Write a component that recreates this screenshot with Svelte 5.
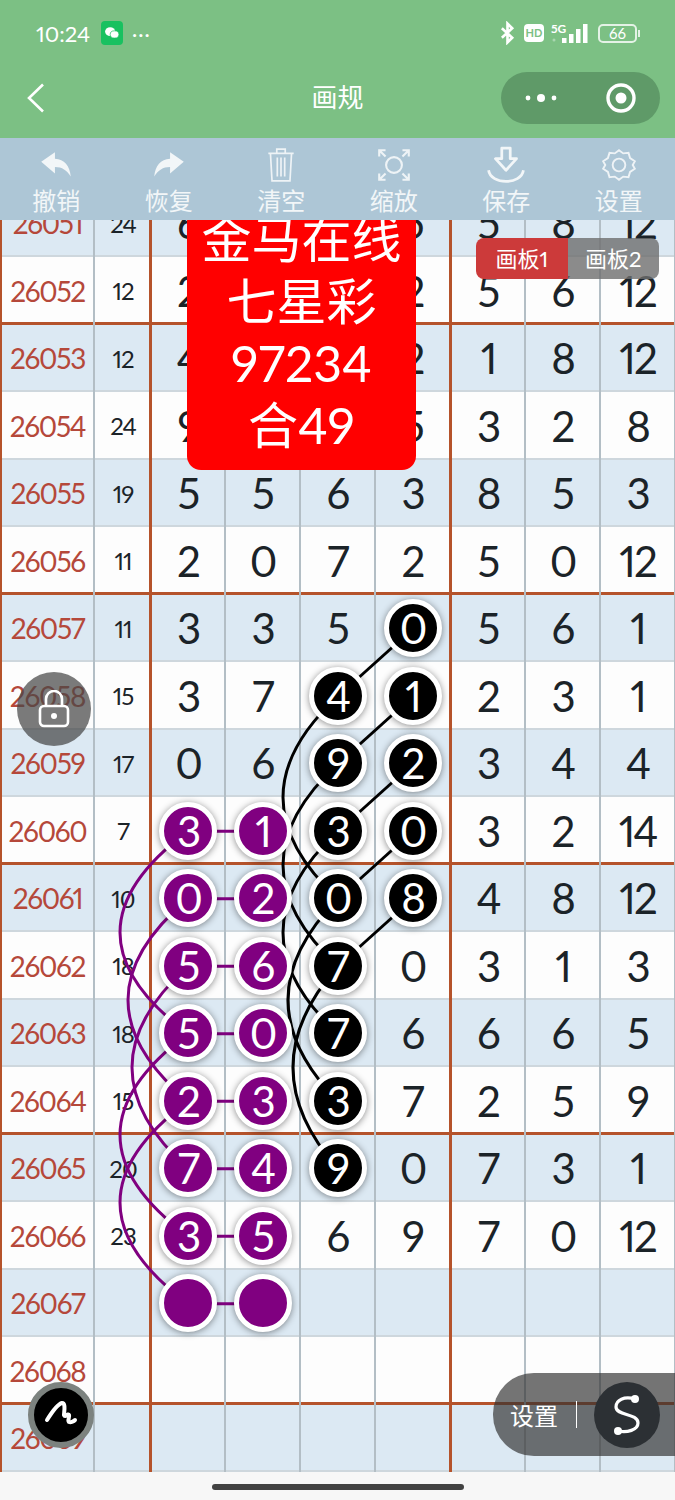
<script>
  const ROW_H = 67.5;
  const FIRST = 26051;
  const COL_X = [188, 263, 338, 413];

  // b = black ball, p = purple ball, anything else is a plain digit
  const rows = [
    { sum: 24, cells: ['6', '', '', '5'], tail: [5, 8, 12] },
    { sum: 12, cells: ['2', '', '', '2'], tail: [5, 6, 12] },
    { sum: 12, cells: ['4', '', '', '2'], tail: [1, 8, 12] },
    { sum: 24, cells: ['9', '', '', '5'], tail: [3, 2, 8] },
    { sum: 19, cells: ['5', '5', '6', '3'], tail: [8, 5, 3] },
    { sum: 11, cells: ['2', '0', '7', '2'], tail: [5, 0, 12] },
    { sum: 11, cells: ['3', '3', '5', 'b0'], tail: [5, 6, 1] },
    { sum: 15, cells: ['3', '7', 'b4', 'b1'], tail: [2, 3, 1] },
    { sum: 17, cells: ['0', '6', 'b9', 'b2'], tail: [3, 4, 4] },
    { sum: 7, cells: ['p3', 'p1', 'b3', 'b0'], tail: [3, 2, 14] },
    { sum: 10, cells: ['p0', 'p2', 'b0', 'b8'], tail: [4, 8, 12] },
    { sum: 18, cells: ['p5', 'p6', 'b7', '0'], tail: [3, 1, 3] },
    { sum: 18, cells: ['p5', 'p0', 'b7', '6'], tail: [6, 6, 5] },
    { sum: 15, cells: ['p2', 'p3', 'b3', '7'], tail: [2, 5, 9] },
    { sum: 20, cells: ['p7', 'p4', 'b9', '0'], tail: [7, 3, 1] },
    { sum: 23, cells: ['p3', 'p5', '6', '9'], tail: [7, 0, 12] },
    { sum: '', cells: ['p', 'p', '', ''], tail: ['', '', ''] },
    { sum: '', cells: ['', '', '', ''], tail: ['', '', ''] },
    { sum: '', cells: ['', '', '', ''], tail: ['', '', ''] }
  ];

  const cy = (r) => ROW_H * r + ROW_H / 2;

  const straight = [
    [3, 6, 2, 7], [3, 7, 2, 8], [3, 8, 2, 9], [3, 9, 2, 10], [3, 10, 2, 11]
  ].map(([c1, r1, c2, r2]) => ({ x1: COL_X[c1], y1: cy(r1), x2: COL_X[c2], y2: cy(r2) }));

  const links = [9, 10, 11, 12, 13, 14, 15, 16];

  const arc = (col, r, bulgeX) => {
    const x = COL_X[col];
    const ctrl = x - 2 * (x - bulgeX);
    const y1 = cy(r);
    const y2 = cy(r + 3);
    return `M${x} ${y1}Q${ctrl} ${(y1 + y2) / 2} ${x} ${y2}`;
  };

  const blackArcs = [[7, 283], [8, 283], [9, 283], [10, 288], [11, 293]].map(([r, b]) => arc(2, r, b));
  const purpleArcs = [[9, 120], [10, 128], [11, 132], [12, 120], [13, 120]].map(([r, b]) => arc(0, r, b));

  const tools = ['撤销', '恢复', '清空', '缩放', '保存', '设置'];
</script>

<div class="page">
  <header class="appbar">
    <div class="status">
      <span class="time">10:24</span>
      <span class="wechat">
        <svg viewBox="0 0 22 22" width="16" height="16">
          <ellipse cx="8.5" cy="9" rx="7" ry="6" fill="#fff" />
          <ellipse cx="14.5" cy="13" rx="6" ry="5" fill="#fff" stroke="#19c160" stroke-width="1" />
        </svg>
      </span>
      <span class="more">···</span>
      <span class="spacer"></span>
      <svg class="bt" viewBox="0 0 16 24" width="15" height="24">
        <path d="M2 7l11 10-5 5V2l5 5L2 17" fill="none" stroke="#fff" stroke-width="2.8" />
      </svg>
      <span class="hd">HD</span>
      <svg class="signal" viewBox="0 0 40 26" width="40" height="26">
        <text x="0" y="13" class="five-g">5G</text>
        <circle cx="3" cy="20" r="1.5" fill="#a9d6b0" />
        <rect x="11" y="18" width="4.5" height="5" fill="#fff" />
        <rect x="18" y="14" width="4.5" height="9" fill="#fff" />
        <rect x="25" y="9" width="4.5" height="14" fill="#fff" />
        <rect x="32" y="4" width="4.5" height="19" fill="#fff" />
      </svg>
      <span class="battery"><span class="level">66</span></span>
      <span class="cap"></span>
    </div>
    <div class="navbar">
      <svg class="back" viewBox="0 0 20 30" width="20" height="30">
        <path d="M17 1.5L3 15l14 13.5" fill="none" stroke="#fff" stroke-width="2.6" />
      </svg>
      <h1>画规</h1>
      <div class="capsule">
        <svg viewBox="0 0 34 10" width="34" height="10">
          <circle cx="4" cy="5" r="2.4" fill="#fff" />
          <circle cx="17" cy="5" r="4" fill="#fff" />
          <circle cx="30" cy="5" r="2.4" fill="#fff" />
        </svg>
        <svg viewBox="0 0 32 32" width="32" height="32">
          <circle cx="16" cy="16" r="13" fill="none" stroke="#fff" stroke-width="3.4" />
          <circle cx="16" cy="16" r="5.5" fill="#fff" />
        </svg>
      </div>
    </div>
  </header>

  <nav class="toolbar">
    {#each tools as label, i}
      <div class="tool">
        <svg viewBox="0 0 36 36" width="38" height="38">
          {#if i === 0}
            <path d="M4 15L17 6v6c9 1 14 6 15 17-4-6-8-9-15-9v6z" fill="#f2f6f8" />
          {:else if i === 1}
            <path d="M32 15L19 6v6c-9 1-14 6-15 17 4-6 8-9 15-9v6z" fill="#f2f6f8" />
          {:else if i === 2}
            <g fill="none" stroke="#eef3f6" stroke-width="1.6">
              <path d="M6 7h24M14 7V3h8v4M8 7l1.5 26h17L28 7M14.5 11v18M18 11v18M21.5 11v18" />
            </g>
          {:else if i === 3}
            <g fill="none" stroke="#eef3f6" stroke-width="2">
              <circle cx="18" cy="18" r="7.5" />
              <path d="M4 10V4h6M26 4h6v6M4 26v6h6M32 26v6h-6M4 4l6 6M32 4l-6 6M4 32l6-6M32 32l-6-6" />
            </g>
          {:else if i === 4}
            <g fill="none" stroke="#f2f6f8" stroke-width="2.6" stroke-linejoin="round">
              <path d="M14 2h8v10h6L18 23 8 12h6zM1.5 23c2 14 31 14 33 0" />
            </g>
          {:else}
            <g fill="none" stroke="#eef3f6" stroke-width="1.8">
              <path d="M18 4l4 3 5-.5 1.5 5 4.5 3-2 3.500 2 3.500-4.500 3-1.500 5-5-.5-4 3-4-3-5 .5-1.500-5-4.500-3 2-3.500-2-3.500 4.500-3 1.500-5 5 .5z" />
              <circle cx="18" cy="18" r="6" />
            </g>
          {/if}
        </svg>
        <span>{label}</span>
      </div>
    {/each}
  </nav>

  <main class="viewport">
    <div class="sheet">
      {#each rows as row, r}
        <div class="row" class:alt={r % 2 === 0} class:thick={r % 4 === 1}>
          <div class="cell issue">{FIRST + r}</div>
          <div class="cell sum">{row.sum}</div>
          {#each row.cells as c, i}
            <div class="cell num" class:edge={i === 0}>
              {#if c[0] === 'b' || c[0] === 'p'}
                <span class="ball" class:purple={c[0] === 'p'}>{c.slice(1)}</span>
              {:else}
                {c}
              {/if}
            </div>
          {/each}
          {#each row.tail as t, i}
            <div class="cell num" class:edge={i === 0}>{t}</div>
          {/each}
        </div>
      {/each}

      <svg class="lines" width="675" height="1282.5" viewBox="0 0 675 1282.5">
        <g stroke="#000" stroke-width="3" fill="none">
          {#each straight as l}
            <line x1={l.x1} y1={l.y1} x2={l.x2} y2={l.y2} />
          {/each}
          {#each blackArcs as d}
            <path {d} />
          {/each}
        </g>
        <g stroke="#800080" stroke-width="3" fill="none">
          {#each links as r}
            <line x1={COL_X[0]} y1={cy(r)} x2={COL_X[1]} y2={cy(r)} />
          {/each}
          {#each purpleArcs as d}
            <path {d} />
          {/each}
        </g>
      </svg>
    </div>

    <div class="promo">
      <div>金马在线</div>
      <div>七星彩</div>
      <div>97234</div>
      <div>合49</div>
    </div>

    <div class="tabs">
      <span class="tab active">画板1</span>
      <span class="tab">画板2</span>
    </div>

    <button class="lock" aria-label="锁定">
      <svg viewBox="0 0 32 38" width="32" height="38">
        <path d="M8 16V9a8 8 0 0 1 16 0v7" fill="none" stroke="#fff" stroke-width="2.6" />
        <rect x="2" y="16" width="28" height="20" rx="4" fill="none" stroke="#fff" stroke-width="2.6" />
        <circle cx="16" cy="26" r="3" fill="#fff" />
      </svg>
    </button>

    <button class="brush" aria-label="画笔">
      <svg viewBox="0 0 40 40" width="40" height="40">
        <path d="M6 25C11 17 17 9 21 8c4 0 2 9 2 12 1 3 4-2 5 0 1 3-2 5 0 7 2 1 5-1 6-2" fill="none" stroke="#fff" stroke-width="4" stroke-linecap="round" stroke-linejoin="round" />
      </svg>
    </button>

    <div class="dock">
      <span class="dock-label">设置</span>
      <span class="divider"></span>
      <span class="dock-btn">
        <svg viewBox="0 0 36 50" width="36" height="50">
          <path d="M26 9C15 6 7 10 7 17c0 9 22 6 22 16 0 7-11 10-20 8" fill="none" stroke="#fff" stroke-width="3.2" />
          <circle cx="26" cy="9" r="4" fill="#fff" />
          <circle cx="9" cy="41" r="4" fill="#fff" />
        </svg>
      </span>
    </div>
  </main>

  <footer class="gesture"><span class="pill"></span></footer>
</div>

<style>
  :global(body) {
    margin: 0;
    background: #f7f7f7;
  }

  .page {
    width: 675px;
    height: 1500px;
    display: flex;
    flex-direction: column;
    overflow: hidden;
    font-family: Lato, "Noto Sans CJK SC", sans-serif;
    font-variant-numeric: proportional-nums;
  }

  .appbar {
    height: 138px;
    background: #7cc084;
    color: #fff;
    flex: none;
  }

  .status {
    height: 66px;
    display: flex;
    align-items: center;
    padding: 0 35px 0 36px;
    box-sizing: border-box;
  }

  .time {
    font-size: 22px;
  }

  .wechat {
    width: 22px;
    height: 24px;
    margin-left: 11px;
    border-radius: 4px;
    background: #19c160;
    display: flex;
    align-items: center;
    justify-content: center;
  }

  .more {
    margin-left: 9px;
    font-size: 20px;
    letter-spacing: 1px;
  }

  .spacer {
    flex: 1;
  }

  .hd {
    width: 20px;
    height: 18px;
    margin-left: 9px;
    border-radius: 4px;
    background: #fff;
    color: #7cc084;
    font-size: 11px;
    font-weight: 700;
    line-height: 18px;
    text-align: center;
  }

  .signal {
    margin-left: 7px;
  }

  .five-g {
    font-size: 12px;
    font-weight: 700;
    fill: #fff;
  }

  .battery {
    width: 39px;
    height: 19px;
    margin-left: 7px;
    border: 2px solid #e4f2e6;
    border-radius: 5px;
    box-sizing: border-box;
    font-size: 15px;
    line-height: 15px;
    text-align: center;
    display: block;
  }

  .cap {
    width: 2px;
    height: 7px;
    margin-left: 1px;
    background: #e4f2e6;
  }

  .navbar {
    height: 72px;
    display: flex;
    align-items: center;
    justify-content: center;
    position: relative;
  }

  .back {
    position: absolute;
    left: 26px;
    top: 17px;
  }

  h1 {
    margin: -14px 0 0;
    font-size: 26px;
    font-weight: 400;
  }

  .capsule {
    position: absolute;
    left: 501px;
    top: 6px;
    width: 159px;
    height: 52px;
    border-radius: 26px;
    background: #5f9a68;
    display: flex;
    align-items: center;
    justify-content: space-between;
    padding: 0 23px;
    box-sizing: border-box;
  }

  .toolbar {
    height: 82px;
    flex: none;
    background: #adc6d6;
    display: grid;
    grid-template-columns: repeat(6, 112.5px);
    position: relative;
    z-index: 5;
  }

  .tool {
    display: flex;
    flex-direction: column;
    align-items: center;
    color: #f2f6f8;
    font-size: 24px;
    line-height: 30px;
    padding-top: 8px;
  }

  .tool span {
    margin-top: 2px;
  }

  .viewport {
    height: 1252px;
    flex: none;
    position: relative;
    overflow: hidden;
  }

  .sheet {
    margin-top: -30.5px;
    position: relative;
  }

  .row {
    height: 67.5px;
    display: grid;
    grid-template-columns: 95px 56px repeat(7, 75px);
    background: #fdfdfd;
    box-shadow: inset 0 -2px 0 #ced7dd;
  }

  .row.alt {
    background: #dce9f3;
  }

  .row.thick {
    box-shadow: inset 0 -3px 0 #b5532b;
  }

  .cell {
    display: flex;
    align-items: center;
    justify-content: center;
    box-sizing: border-box;
    border-right: 2px solid #b3bec5;
    color: #1b2328;
  }

  .issue {
    border-left: 2px solid #b5532b;
    color: #b5483a;
    font-size: 28px;
    letter-spacing: -1.3px;
  }

  .sum {
    font-size: 24px;
    letter-spacing: -1px;
    border-right: none;
  }

  .num {
    font-size: 42px;
    letter-spacing: -2px;
  }

  .edge {
    margin-left: -2px;
    border-left: 3px solid #b5532b;
  }

  .ball {
    width: 48px;
    height: 48px;
    flex: none;
    border: 5px solid #fff;
    border-radius: 50%;
    background: #000;
    color: #fff;
    display: flex;
    align-items: center;
    justify-content: center;
    position: relative;
    z-index: 2;
    box-shadow: 0 1px 7px rgba(0, 0, 0, 0.45);
  }

  .ball.purple {
    background: #800080;
  }

  .lines {
    position: absolute;
    top: 0;
    left: 0;
    z-index: 1;
    pointer-events: none;
  }

  .promo {
    position: absolute;
    left: 187px;
    top: -12px;
    width: 229px;
    padding-bottom: 14px;
    background: #ff0000;
    border-radius: 14px;
    color: #fff;
    font-size: 50px;
    line-height: 62px;
    text-align: center;
    z-index: 3;
  }

  .tabs {
    position: absolute;
    left: 476px;
    top: 18px;
    width: 183px;
    height: 41px;
    display: flex;
    border-radius: 8px;
    overflow: hidden;
    z-index: 3;
  }

  .tab {
    flex: 1;
    background: rgba(110, 110, 110, 0.8);
    color: #fff;
    font-size: 22px;
    line-height: 41px;
    text-align: center;
  }

  .tab.active {
    background: #cc3a3a;
  }

  button {
    padding: 0;
    border: none;
  }

  .lock {
    position: absolute;
    left: 17px;
    top: 452px;
    width: 74px;
    height: 74px;
    border-radius: 50%;
    background: rgba(70, 70, 70, 0.72);
    display: flex;
    align-items: center;
    justify-content: center;
    z-index: 4;
  }

  .brush {
    position: absolute;
    left: 28px;
    top: 1162px;
    width: 54px;
    height: 54px;
    border: 6px solid #7c827f;
    box-sizing: content-box;
    border-radius: 50%;
    background: #000;
    display: flex;
    align-items: center;
    justify-content: center;
    z-index: 4;
  }

  .dock {
    position: absolute;
    left: 493px;
    top: 1153px;
    width: 182px;
    height: 83px;
    border-radius: 41px 0 0 41px;
    background: rgba(50, 50, 50, 0.68);
    display: flex;
    align-items: center;
    color: #fff;
    z-index: 4;
  }

  .dock-label {
    margin-left: 17px;
    font-size: 24px;
  }

  .divider {
    width: 1px;
    height: 27px;
    margin-left: 18px;
    background: #fff;
  }

  .dock-btn {
    width: 66px;
    height: 66px;
    margin-left: 17px;
    border-radius: 50%;
    background: #2c3034;
    display: flex;
    align-items: center;
    justify-content: center;
  }

  .gesture {
    flex: 1;
    display: flex;
    justify-content: center;
    background: #f7f7f7;
  }

  .pill {
    width: 252px;
    height: 6px;
    margin-top: 12px;
    border-radius: 3px;
    background: #424242;
  }
</style>
